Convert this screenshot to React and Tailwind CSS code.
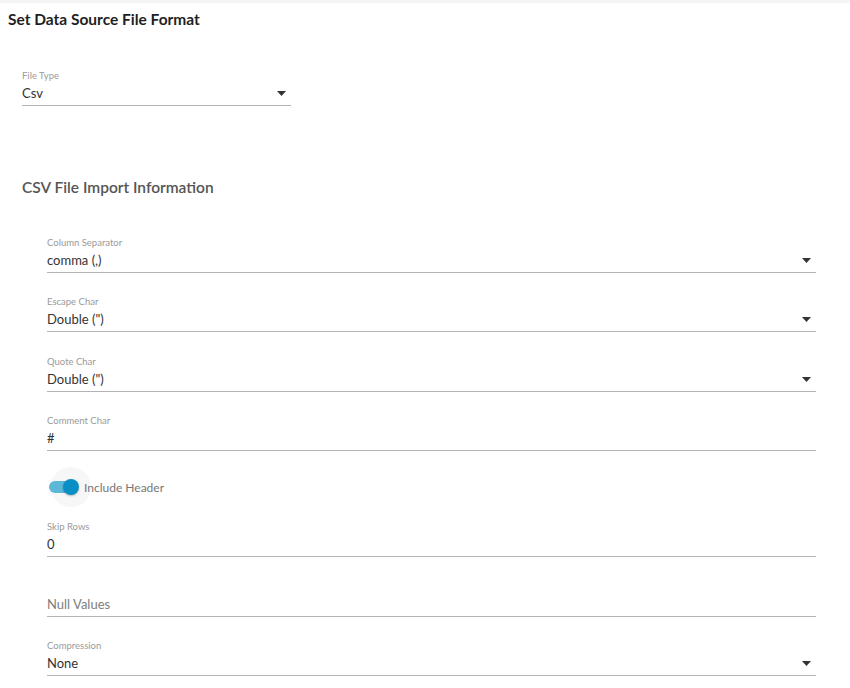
import React from "react";

const font = { fontFamily: "Lato, 'Noto Sans', sans-serif" };

function Arrow() {
  return (
    <svg width="9" height="5" viewBox="0 0 9 5" className="shrink-0">
      <path d="M0 0 L9 0 L4.5 5 Z" fill="#333" />
    </svg>
  );
}

function Field({ label, value, placeholder, select }) {
  return (
    <div className="flex flex-col border-b border-[#b3b3b3] pb-[3px]">
      <div className="h-[12px] text-[9.5px] leading-[12px] text-[#9a9a9a]">{label}</div>
      <div className="mt-[2px] flex h-[18px] items-center justify-between pr-[5px]">
        {placeholder ? (
          <span className="text-[13px] leading-[18px] text-[#7d7d7d]">{placeholder}</span>
        ) : (
          <span className="text-[13px] leading-[18px] text-[#333]">{value}</span>
        )}
        {select && <Arrow />}
      </div>
    </div>
  );
}

export default function App() {
  return (
    <div className="w-[850px] h-[688px] overflow-hidden bg-white" style={font}>
      <div className="h-[3px] bg-[#f5f5f5]" />
      <div className="pl-[8px] pt-[7px] text-[15.5px] leading-[18px] font-bold text-[#1f1f1f]">
        Set Data Source File Format
      </div>
      <div className="pl-[22px] pt-[42px] w-[291px]">
        <Field label="File Type" value="Csv" select />
      </div>
      <div className="pl-[22px] pt-[72px] text-[15.5px] leading-[18px] font-semibold text-[#555]">
        CSV File Import Information
      </div>
      <div className="ml-[47px] w-[769px] mt-[41px] flex flex-col">
        <Field label="Column Separator" value="comma (,)" select />
        <div className="mt-[23px]"><Field label="Escape Char" value={'Double (")'} select /></div>
        <div className="mt-[24px]"><Field label="Quote Char" value={'Double (")'} select /></div>
        <div className="mt-[23px]"><Field label="Comment Char" value="#" /></div>
        <div className="mt-[17px] flex h-[38px] items-center">
          <div className="relative h-[38px] w-[37px] shrink-0">
            <div className="absolute left-[4px] top-[-1px] h-[40px] w-[40px] rounded-full bg-[#f7f7f7]" />
            <div className="absolute left-[2px] top-[13px] h-[12px] w-[28px] rounded-full bg-[#5bb8d8]" />
            <div className="absolute left-[16px] top-[11px] h-[16px] w-[16px] rounded-full bg-[#0a8fc4] shadow-[0_1px_2px_rgba(0,0,0,0.25)]" />
          </div>
          <span className="relative pt-[1px] text-[12px] leading-[18px] text-[#777]">Include Header</span>
        </div>
        <div className="mt-[15px]"><Field label="Skip Rows" value="0" /></div>
        <div className="mt-[24px]"><Field label="" placeholder="Null Values" /></div>
        <div className="mt-[23px]"><Field label="Compression" value="None" select /></div>
      </div>
    </div>
  );
}
